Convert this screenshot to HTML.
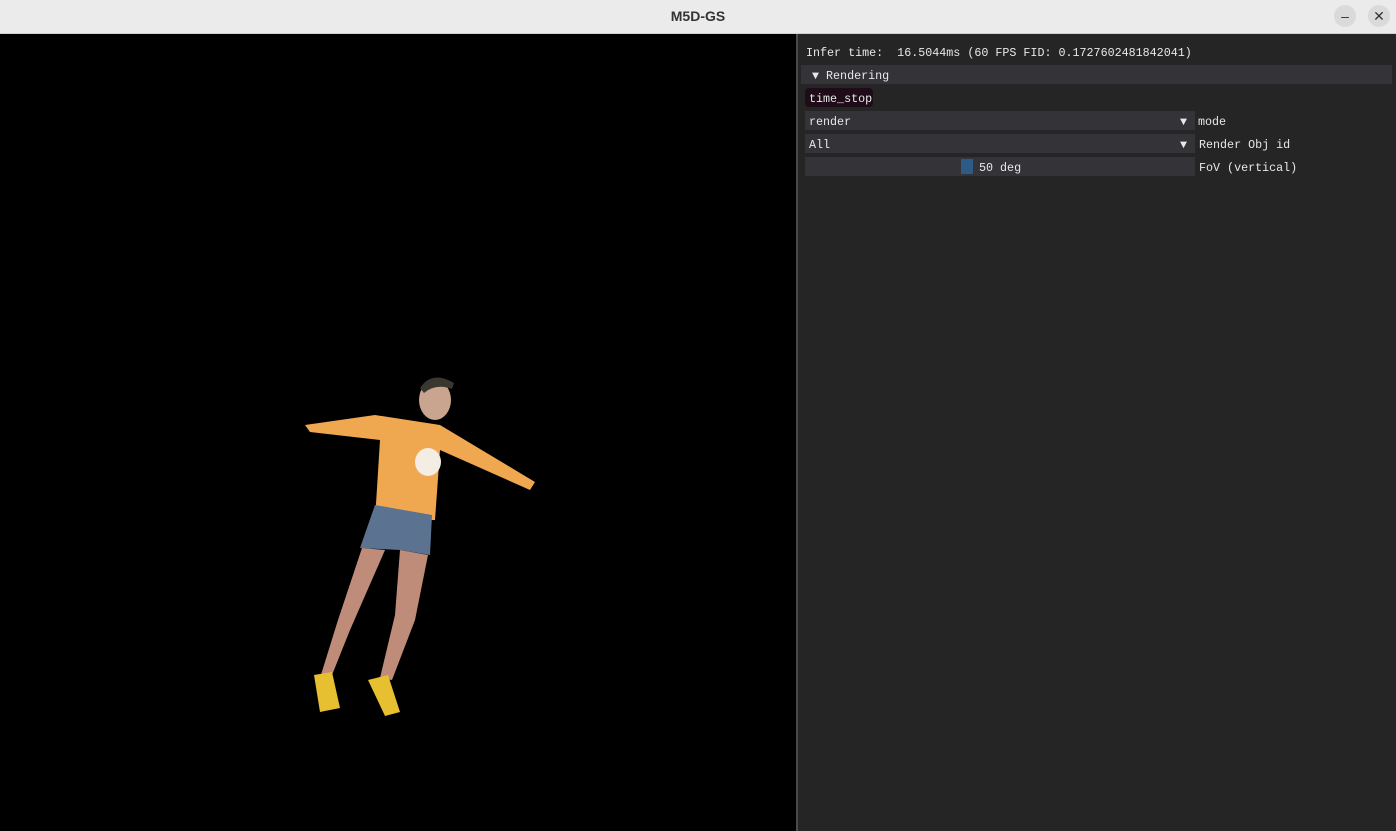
<html><head><style>
body{margin:0;width:1396px;height:831px;overflow:hidden;background:#000;font-family:"Liberation Mono",monospace;}
.title{position:absolute;left:0;top:0;width:1396px;height:34px;background:#ebebeb;border-bottom:1px solid #d0d0d0;box-sizing:border-box}
.title .t{position:absolute;left:0;right:0;top:8px;text-align:center;font:bold 14px "Liberation Sans",sans-serif;color:#333}
.btn{position:absolute;top:5px;width:22px;height:22px;border-radius:11px;background:#dadada;text-align:center;font:14px "Liberation Sans",sans-serif;color:#333;line-height:22px}
.panel{position:absolute;left:796px;top:34px;width:600px;height:797px;background:#252526;border-left:2px solid #4a4a4a;box-sizing:border-box}
.tx{position:absolute;color:#e8e8e8;font-size:11.7px;white-space:pre;line-height:21px}
.box{position:absolute;background:#333338}
</style></head><body>
<div class="title"><div class="t">M5D-GS</div><div class="btn" style="left:1334px">–</div><div class="btn" style="left:1368px">✕</div></div>
<svg style="position:absolute;left:0;top:34px" width="796" height="797">
<g transform="translate(0,-34)">
<ellipse cx="435" cy="400" rx="16" ry="20" fill="#c9a48e"/>
<path d="M420 388 q12-18 34-5 l-2 6 q-16-6-28 4z" fill="#3a3630"/>
<path d="M305 425 L375 415 L440 425 L535 482 L530 490 L440 450 L435 520 L375 520 L380 440 L310 432Z" fill="#f0a850"/>
<ellipse cx="428" cy="462" rx="13" ry="14" fill="#f3ede4"/>
<path d="M375 505 L432 515 L430 555 L400 550 L360 548Z" fill="#5b7290"/>
<path d="M362 548 L385 550 L350 630 L330 680 L320 678 L338 620Z" fill="#c08c7a"/>
<path d="M400 550 L428 555 L415 620 L392 680 L380 678 L395 615Z" fill="#c08c7a"/>
<path d="M314 675 L332 672 L340 708 L320 712Z" fill="#e6c030"/>
<path d="M368 680 L388 675 L400 712 L385 716Z" fill="#e6c030"/>
</g></svg>
<div class="panel">
<div class="tx" style="left:8px;top:9px">Infer time:  16.5044ms (60 FPS FID: 0.1727602481842041)</div>
<div class="box" style="left:3px;top:31px;width:591px;height:19px"></div>
<div class="tx" style="left:14px;top:32px">▼ Rendering</div>
<div class="box" style="left:7px;top:54px;width:68px;height:19px;background:#1e0c18;border-radius:4px"></div>
<div class="tx" style="left:11px;top:55px">time_stop</div>
<div class="box" style="left:7px;top:77px;width:390px;height:19px"></div>
<div class="tx" style="left:11px;top:78px">render</div><div class="tx" style="left:382px;top:78px">▼</div><div class="tx" style="left:400px;top:78px">mode</div>
<div class="box" style="left:7px;top:100px;width:390px;height:19px"></div>
<div class="tx" style="left:11px;top:101px">All</div><div class="tx" style="left:382px;top:101px">▼</div><div class="tx" style="left:401px;top:101px">Render Obj id</div>
<div class="box" style="left:7px;top:123px;width:390px;height:19px"></div>
<div class="box" style="left:163px;top:125px;width:12px;height:15px;background:#2b5b86"></div>
<div class="tx" style="left:181px;top:124px">50 deg</div>
<div class="tx" style="left:401px;top:124px">FoV (vertical)</div>
</div>
</body></html>
